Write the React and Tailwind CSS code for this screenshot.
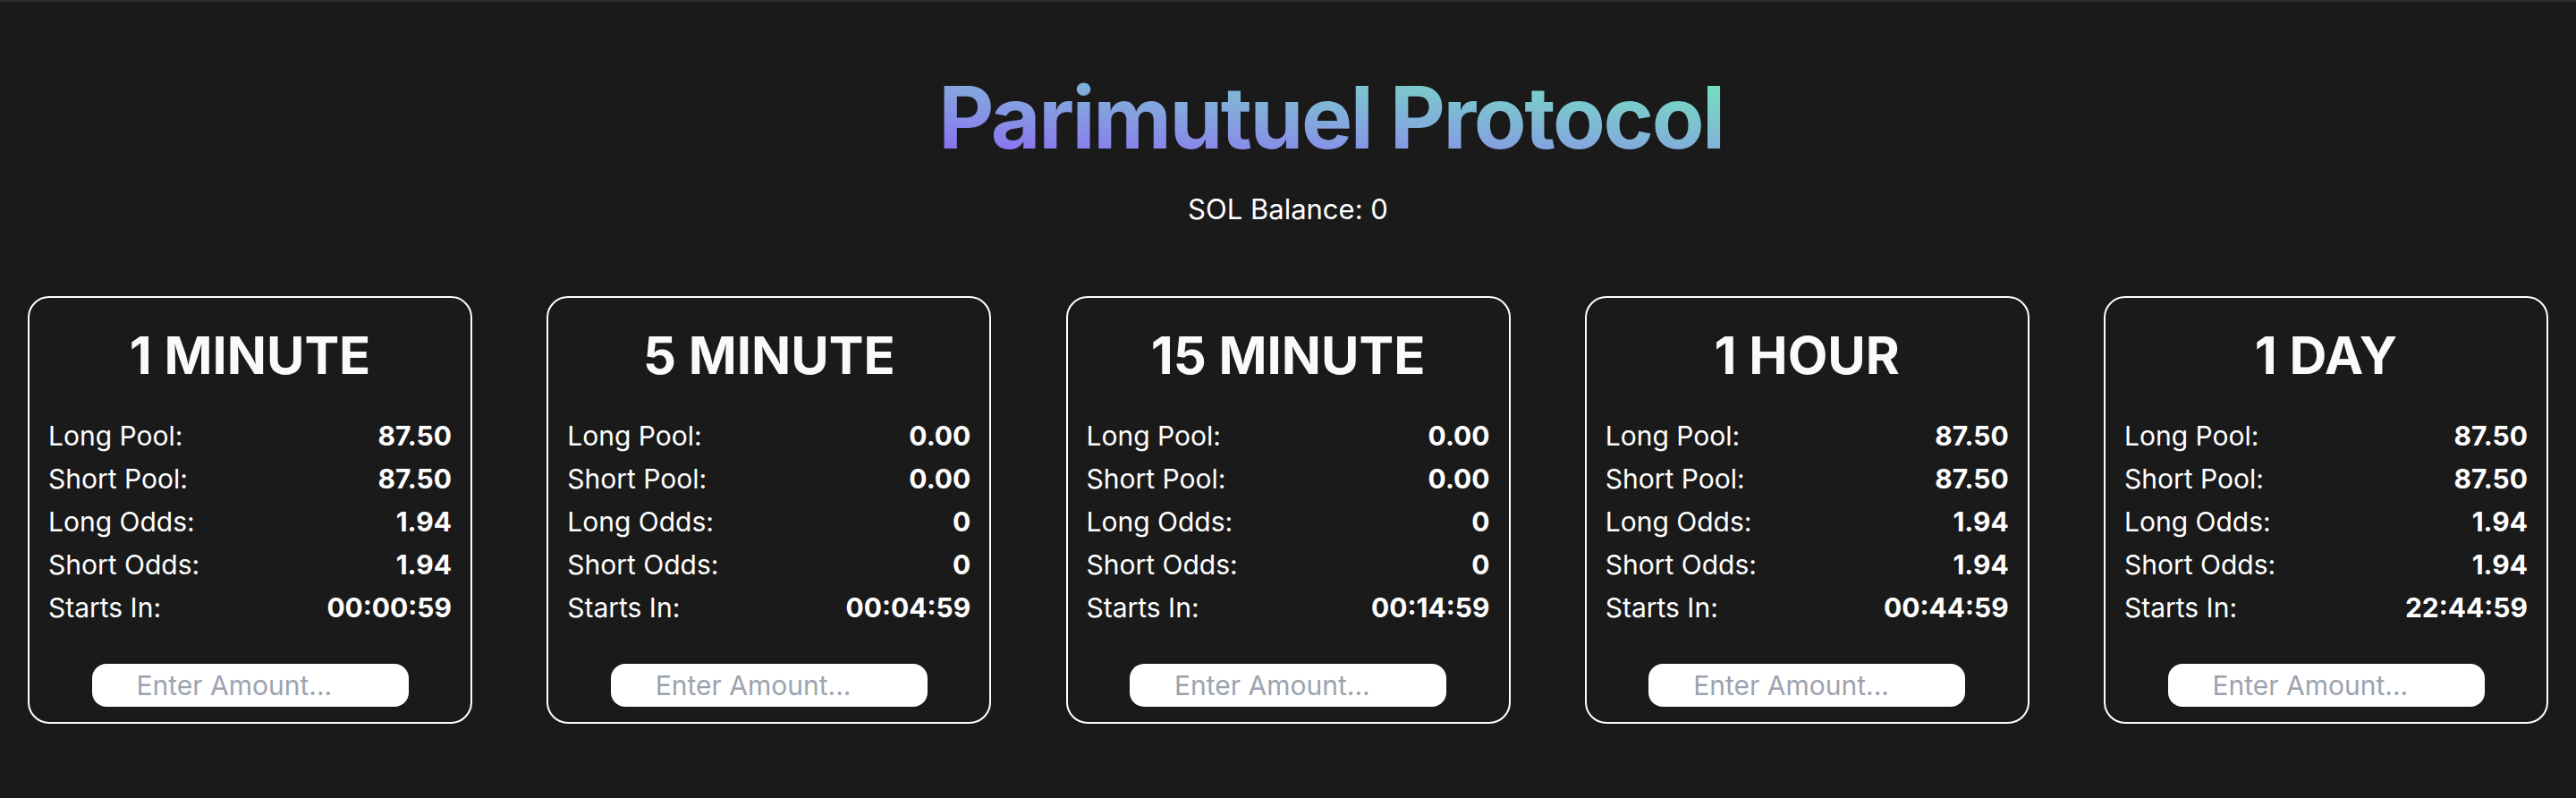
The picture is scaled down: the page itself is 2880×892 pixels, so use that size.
import React from "react";

const markets = [
    { name: "1 MINUTE", longPool: "87.50", shortPool: "87.50", longOdds: "1.94", shortOdds: "1.94", startsIn: "00:00:59" },
    { name: "5 MINUTE", longPool: "0.00", shortPool: "0.00", longOdds: "0", shortOdds: "0", startsIn: "00:04:59" },
    { name: "15 MINUTE", longPool: "0.00", shortPool: "0.00", longOdds: "0", shortOdds: "0", startsIn: "00:14:59" },
    { name: "1 HOUR", longPool: "87.50", shortPool: "87.50", longOdds: "1.94", shortOdds: "1.94", startsIn: "00:44:59" },
    { name: "1 DAY", longPool: "87.50", shortPool: "87.50", longOdds: "1.94", shortOdds: "1.94", startsIn: "22:44:59" },
];

function Row({ label, value }) {
    return (
        <div className="flex w-full items-center justify-between text-[30px] leading-[48px]">
            <span className="font-normal text-white">{label}</span>
            <span className="font-bold text-white">{value}</span>
        </div>
    );
}

function MarketCard({ market }) {
    return (
        <div className="flex h-[478px] w-[497px] flex-col items-center rounded-[24px] border-2 border-white px-[21px] pt-[28px]">
            <h2 className="text-[58px] font-bold leading-[72px] text-gray-50">{market.name}</h2>
            <div className="mt-[30px] flex w-full flex-col">
                <Row label="Long Pool:" value={market.longPool} />
                <Row label="Short Pool:" value={market.shortPool} />
                <Row label="Long Odds:" value={market.longOdds} />
                <Row label="Short Odds:" value={market.shortOdds} />
                <Row label="Starts In:" value={market.startsIn} />
            </div>
            <input
                type="text"
                placeholder="Enter Amount..."
                className="mt-[39px] h-[48px] w-[354px] rounded-[16px] bg-white pl-[50px] text-[30px] text-gray-900 outline-none placeholder:text-[#9ca3af]"
            />
        </div>
    );
}

export default function App() {
    return (
        <div className="min-h-screen border-t-2 border-[#2b2b2b] bg-[#1a1a1a] font-['Inter',sans-serif] text-white">
            <div className="flex flex-col items-center pt-[81px]">
                <h1 className="bg-linear-to-tr from-[#8b5cf6] to-[#6ee7b7] bg-clip-text pl-[96px] text-[96px] font-bold leading-[96px] tracking-tight text-transparent">
                    Parimutuel Protocol
                </h1>
                <p className="mt-[31px] text-[31px] leading-[48px] text-white">SOL Balance: 0</p>
            </div>
            <div className="mt-[73px] flex justify-between px-[31px]">
                {markets.map((m) => (
                    <MarketCard key={m.name} market={m} />
                ))}
            </div>
        </div>
    );
}
